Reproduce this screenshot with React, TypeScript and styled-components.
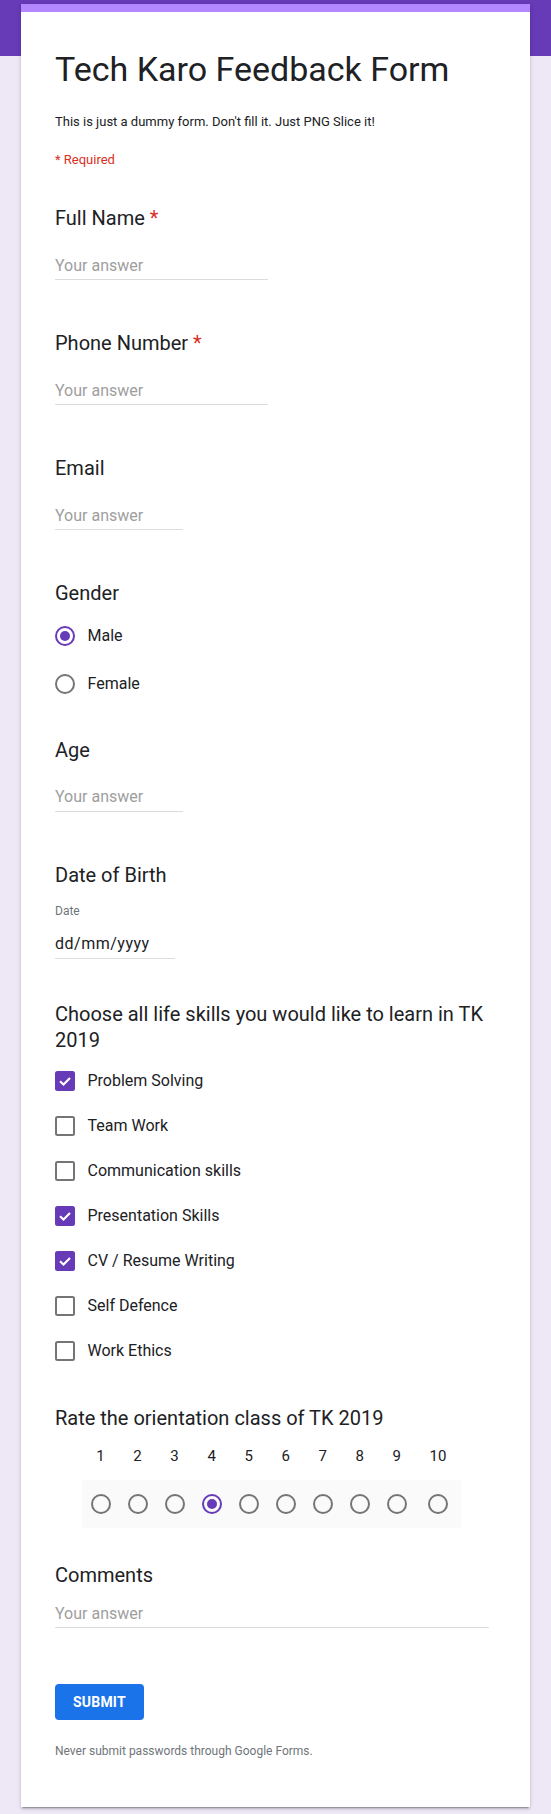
import React from 'react';
import styled, { createGlobalStyle } from 'styled-components';

const GlobalStyle = createGlobalStyle`
  html, body {
    margin: 0;
    padding: 0;
  }

  body {
    background: linear-gradient(#673ab7, #673ab7) top left / 100% 56px no-repeat, #ede7f6;
    font-family: Roboto, "Noto Sans", Arial, sans-serif;
    color: #202124;
  }

  * {
    box-sizing: border-box;
  }
`;

const Page = styled.div`
  padding: 4px 21px 10px;
`;

const Card = styled.form`
  width: 509px;
  background: #fff;
  border-top: 8px solid #b388ff;
  padding: 37px 41px 47.5px 34px;
  box-shadow: 0 2px 2px rgba(0, 0, 0, 0.14), 0 1px 5px rgba(0, 0, 0, 0.12), 0 3px 1px -2px rgba(0, 0, 0, 0.2);
`;

const FormTitle = styled.h1`
  margin: 0;
  font-size: 34px;
  line-height: 40px;
  font-weight: 400;
  color: #202124;
`;

const Description = styled.p`
  margin: 24px 0 0;
  font-size: 13px;
  line-height: 18px;
  color: #202124;
`;

const RequiredNote = styled.div`
  margin-top: 19.5px;
  font-size: 13px;
  line-height: 18px;
  color: #d93025;
`;

const Question = styled.div<{ $mt?: number }>`
  display: flex;
  flex-direction: column;
  align-items: flex-start;
  margin-top: ${({ $mt }) => $mt ?? 40}px;
`;

const QuestionTitle = styled.div`
  font-size: 20px;
  line-height: 26px;
  color: #202124;
`;

const Asterisk = styled.span`
  color: #d93025;
`;

const AnswerInput = styled.input<{ $width?: string; $mt?: number; $mb?: number }>`
  display: block;
  width: ${({ $width }) => $width ?? '213px'};
  height: 25px;
  margin: ${({ $mt }) => $mt ?? 24}px 0 ${({ $mb }) => $mb ?? 10}px;
  padding: 0 0 4px;
  border: none;
  border-bottom: 1px solid #dadce0;
  outline: none;
  background: transparent;
  font-family: inherit;
  font-size: 16px;
  line-height: 20px;
  color: #202124;

  &::placeholder {
    color: #9e9e9e;
  }
`;

const DateLabel = styled.div`
  margin-top: 15px;
  font-size: 12px;
  line-height: 16px;
  color: #70757a;
`;

const DateValue = styled.div`
  width: 120px;
  margin: 15px 0 2px;
  padding-bottom: 4.5px;
  border-bottom: 1px solid #dadce0;
  font-size: 16px;
  line-height: 20px;
  letter-spacing: 0.5px;
  color: #202124;
`;

const OptionList = styled.div<{ $mt: number; $gap: number }>`
  display: flex;
  flex-direction: column;
  gap: ${({ $gap }) => $gap}px;
  margin-top: ${({ $mt }) => $mt}px;
`;

const OptionRow = styled.label`
  display: flex;
  align-items: center;
  height: 28px;
  gap: 12.5px;
  font-size: 16px;
  color: #202124;
  cursor: pointer;
`;

const Radio = styled.span<{ $checked?: boolean }>`
  width: 20px;
  height: 20px;
  flex-shrink: 0;
  border-radius: 50%;
  border: 2px solid ${({ $checked }) => ($checked ? '#673ab7' : '#757575')};
  display: flex;
  align-items: center;
  justify-content: center;

  &::after {
    content: '';
    display: ${({ $checked }) => ($checked ? 'block' : 'none')};
    width: 10px;
    height: 10px;
    border-radius: 50%;
    background: #673ab7;
  }
`;

const CheckBox = styled.span<{ $checked?: boolean }>`
  width: 20px;
  height: 20px;
  flex-shrink: 0;
  border-radius: 2.5px;
  border: 2px solid ${({ $checked }) => ($checked ? '#673ab7' : '#757575')};
  background: ${({ $checked }) => ($checked ? '#673ab7' : 'transparent')};
  display: flex;
  align-items: center;
  justify-content: center;
`;

const Scale = styled.div`
  display: flex;
  margin: 15.2px 0 0 27px;
`;

const ScaleColumn = styled.div`
  display: flex;
  flex-direction: column;
  align-items: stretch;
`;

const ScaleLabel = styled.div`
  padding: 0 14.3px;
  font-size: 15px;
  line-height: 20px;
  text-align: center;
  color: #202124;
`;

const ScaleCell = styled.div`
  height: 48px;
  margin-top: 13.8px;
  background: #fafafa;
  display: flex;
  align-items: center;
  justify-content: center;
`;

const SubmitButton = styled.button`
  display: block;
  height: 36px;
  margin-top: 55.5px;
  padding: 0 18px;
  border: none;
  border-radius: 4px;
  background: #1a73e8;
  color: #fff;
  font-family: inherit;
  font-size: 14px;
  font-weight: 700;
  letter-spacing: 0.2px;
  cursor: pointer;
`;

const Footer = styled.div`
  margin-top: 23.5px;
  font-size: 12px;
  line-height: 16px;
  color: #70757a;
`;

const skills = [
  { label: 'Problem Solving', checked: true },
  { label: 'Team Work', checked: false },
  { label: 'Communication skills', checked: false },
  { label: 'Presentation Skills', checked: true },
  { label: 'CV / Resume Writing', checked: true },
  { label: 'Self Defence', checked: false },
  { label: 'Work Ethics', checked: false },
];

const ratings = [1, 2, 3, 4, 5, 6, 7, 8, 9, 10];

function CheckMark() {
  return (
    <svg width="16" height="16" viewBox="0 0 16 16">
      <polyline points="3,8.3 6.5,11.6 13,4.9" fill="none" stroke="#fff" strokeWidth="2.1" />
    </svg>
  );
}

export default function App() {
  return (
    <>
      <GlobalStyle />
      <Page>
        <Card onSubmit={(e) => e.preventDefault()}>
          <FormTitle>Tech Karo Feedback Form</FormTitle>
          <Description>This is just a dummy form. Don't fill it. Just PNG Slice it!</Description>
          <RequiredNote>* Required</RequiredNote>

          <Question $mt={36.8}>
            <QuestionTitle>
              Full Name <Asterisk>*</Asterisk>
            </QuestionTitle>
            <AnswerInput placeholder="Your answer" />
          </Question>

          <Question>
            <QuestionTitle>
              Phone Number <Asterisk>*</Asterisk>
            </QuestionTitle>
            <AnswerInput placeholder="Your answer" />
          </Question>

          <Question>
            <QuestionTitle>Email</QuestionTitle>
            <AnswerInput placeholder="Your answer" $width="128px" />
          </Question>

          <Question>
            <QuestionTitle>Gender</QuestionTitle>
            <OptionList $mt={15.5} $gap={20}>
              <OptionRow>
                <Radio $checked />
                Male
              </OptionRow>
              <OptionRow>
                <Radio />
                Female
              </OptionRow>
            </OptionList>
          </Question>

          <Question $mt={39.2}>
            <QuestionTitle>Age</QuestionTitle>
            <AnswerInput placeholder="Your answer" $width="128px" />
          </Question>

          <Question>
            <QuestionTitle>Date of Birth</QuestionTitle>
            <DateLabel>Date</DateLabel>
            <DateValue>dd/mm/yyyy</DateValue>
          </Question>

          <Question>
            <QuestionTitle>Choose all life skills you would like to learn in TK 2019</QuestionTitle>
            <OptionList $mt={13.5} $gap={17}>
              {skills.map((skill) => (
                <OptionRow key={skill.label}>
                  <CheckBox $checked={skill.checked}>{skill.checked && <CheckMark />}</CheckBox>
                  {skill.label}
                </OptionRow>
              ))}
            </OptionList>
          </Question>

          <Question>
            <QuestionTitle>Rate the orientation class of TK 2019</QuestionTitle>
            <Scale>
              {ratings.map((n) => (
                <ScaleColumn key={n}>
                  <ScaleLabel>{n}</ScaleLabel>
                  <ScaleCell>
                    <Radio $checked={n === 4} />
                  </ScaleCell>
                </ScaleColumn>
              ))}
            </Scale>
          </Question>

          <Question $mt={34.1}>
            <QuestionTitle>Comments</QuestionTitle>
            <AnswerInput placeholder="Your answer" $width="100%" $mt={15} $mb={0} />
          </Question>

          <SubmitButton type="submit">SUBMIT</SubmitButton>
          <Footer>Never submit passwords through Google Forms.</Footer>
        </Card>
      </Page>
    </>
  );
}
